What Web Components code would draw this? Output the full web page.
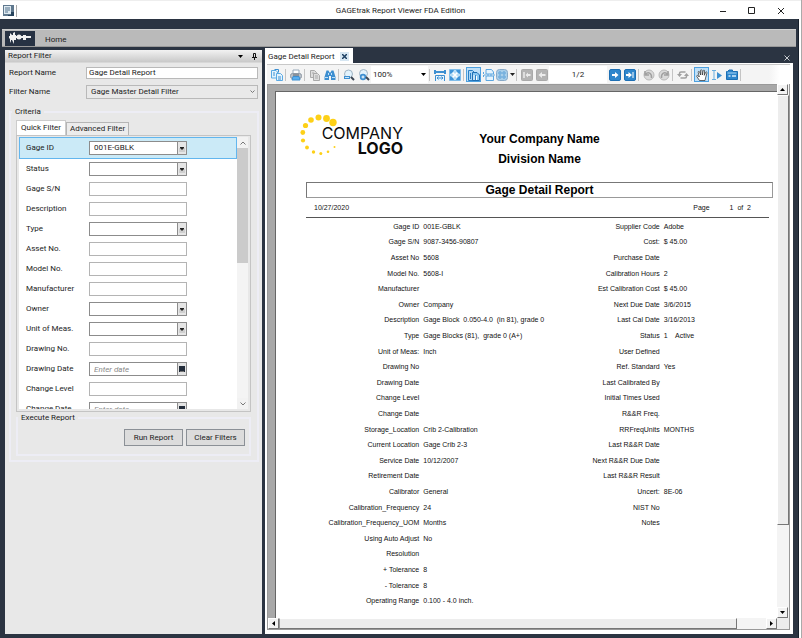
<!DOCTYPE html>
<html lang="en">
<head>
<meta charset="utf-8">
<title>GAGEtrak Report Viewer FDA Edition</title>
<style>
  html, body { margin: 0; height: 100%; }
  body { font: 8px/12px Roboto, "Open Sans", sans-serif; color: #1c1c1c; background: #fff; }
</style>
</head>
<body>
<gage-app></gage-app>
<script>
const define = (name, html, setup) => {
  const tpl = document.createElement('template');
  tpl.innerHTML = '<style>*{box-sizing:border-box}button,input,select{font:inherit;color:inherit;margin:0}</style>' + html;
  customElements.define(name, class extends HTMLElement {
    constructor() {
      super();
      this.attachShadow({ mode: 'open' }).appendChild(tpl.content.cloneNode(true));
    }
    connectedCallback() { if (setup) setup(this, this.shadowRoot); }
  });
};

/* ---------- toolbar icons ---------- */
const B = '#3d8fd1', D = '#1d5c98', G = '#a9a9a9';
const ICONS = {
  pages: `<path d="M.5 1.500h4.500l1.500 1.500v6h-6z" fill="#e4f3fd" stroke="#5aa9e3"/><path d="M5.500 4.500h4l2 2v5h-6z" fill="#e4f3fd" stroke="#5aa9e3"/><path d="M2 4h2M2 6h2M7 8h3M7 10h3M3.500 .5h4v3" stroke="${B}"/>`,
  print: `<path d="M3 1h6v4H3z" fill="#fff" stroke="#9ab"/><rect x=".5" y="4.500" width="11" height="5" rx="2" fill="#b9c0c8" stroke="#8e99a5"/><path d="M3 7.500h6l1 3.500H2z" fill="#58aef0" stroke="${B}"/><path d="M3 6h6" stroke="#59636e"/>`,
  copy: `<g fill="#ddd" stroke="${G}"><path d="M1.500 1.500h4l2 2v5h-6z"/><path d="M4.500 4.500h4l2 2v5h-6z"/></g><path d="M6 7h3M6 9h3M3 4h2" stroke="${G}"/>`,
  find: `<path d="M2.500 1.500h2l1 2h1l1-2h2l2 6.500v3H7V7H5v4H.5V8z" fill="${B}"/><path d="M4.500 4v2M7.500 4v2M1 8.500h3M8 8.500h3" stroke="#bfe0f7"/>`,
  zoomOut: `<circle cx="5.500" cy="5" r="4" fill="#e2f2fc" stroke="#9fb4c4"/><path d="M1 7h6v3H1z" fill="${B}"/><path d="M2 8.500h4" stroke="#cbe6f9"/><path d="M8 8l3 3" stroke="#3b4654" stroke-width="2"/>`,
  zoomIn: `<circle cx="5.500" cy="4.500" r="4" fill="#e2f2fc" stroke="#9fb4c4"/><circle cx="5" cy="8" r="3.200" fill="${B}"/><path d="M3.500 8h3M5 6.500v3" stroke="#fff"/><path d="M8 8l3 3" stroke="#3b4654" stroke-width="2"/>`,
  width: `<path d="M1 1v4M11 1v4M1 3h10" stroke="${B}" stroke-width="2" fill="none"/><path d="M1.500 12V6.500h9V12" stroke="${B}" fill="#e7f4fd"/><path d="M3 9h6M4.500 7.500L3 9l1.500 1.500M7.500 7.500L9 9l-1.500 1.500" stroke="${B}" fill="none"/>`,
  full: `<path d="M.5 .5h11v11H.5z" fill="#b5dcf6" stroke="#7fbdea"/><path d="M3 3l6 6M9 3L3 9" stroke="#fff" stroke-width="1.500"/><path d="M1 5V1h4L4 3l-1 1zM7 1h4v4L9 4 8 3zM1 7v4h4L4 9 3 8zM11 7v4H7l1-2 1-1z" fill="#3d93d8"/>`,
  single: `<path d="M.5 1.500h4l2 2v8h-6z" fill="#a9d5f5" stroke="#2b7fc4"/><path d="M4.500 3.500h4.500l2.500 2.500v5.500h-7z" fill="#8ac7f1" stroke="#1f6fb3"/><path d="M6 6v5M8.500 7v4" stroke="#fff"/><path d="M7.500 6v5M2.500 4v6" stroke="#2b7fc4"/>`,
  scroll: `<path d="M3 .5h5.500l2 2.500v2H3zM3 7h7.500v4.500H3z" fill="#e4f3fd" stroke="#5aa6e0"/><path d="M.5 3v6M1 6h11" stroke="#5aa6e0" stroke-dasharray="2 1"/>`,
  multi: `<rect x=".5" y=".5" width="11" height="11" rx="3" fill="#a9cfea" stroke="#86a9c8"/><path d="M3 3h2v2H3zM7 3h2v2H7zM3 7h2v2H3zM7 7h2v2H7z" fill="#d7ecfa" stroke="#5a9fd6"/>`,
  first: `<rect x=".5" y=".5" width="11" height="11" rx="1" fill="#b4b4b4" stroke="${G}"/><path d="M3 3v6" stroke="#ececec" stroke-width="1.500"/><path d="M4.500 6L7 3.500V5h2.500v2H7v1.500z" fill="#ececec"/>`,
  prev: `<rect x=".5" y=".5" width="11" height="11" rx="1" fill="#b4b4b4" stroke="${G}"/><path d="M2.500 6L6 3v2h3.500v2H6v2z" fill="#ececec"/>`,
  next: `<rect x=".5" y=".5" width="11" height="11" rx="1.500" fill="#2f86cc" stroke="#1d6fb4"/><path d="M9.500 6L6 3v2H3v2h3v2z" fill="#fff"/>`,
  last: `<rect x=".5" y=".5" width="11" height="11" rx="1.500" fill="#2f86cc" stroke="#1d6fb4"/><path d="M2 5h2.500V3L8 6 4.500 9V7H2z" fill="#fff"/><path d="M9 3v6" stroke="#fff"/>`,
  back: `<circle cx="6" cy="6" r="5" fill="#dadada" stroke="#b9b9b9"/><path d="M2 2v4h4M2.500 5.500C5 2 9 4 8.500 9" fill="none" stroke="#a0a0a0" stroke-width="1.500"/>`,
  fwd: `<circle cx="6" cy="6" r="5" fill="#dadada" stroke="#b9b9b9"/><path d="M10 2v4H6M9.500 5.500C7 2 3 4 3.500 9" fill="none" stroke="#a0a0a0" stroke-width="1.500"/>`,
  refresh: `<path d="M2.500 6V4.500Q2.500 3 4 3h4.500M9.500 6v1.500Q9.500 9 8 9H3.500" fill="none" stroke="#a0a0a0" stroke-width="1.500"/><path d="M0 5h5L2.500 8zM7 7h5L9.500 4z" fill="#a0a0a0"/>`,
  hand: `<path d="M3.500 11.500L.8 7.500c-.5-1 .8-1.600 1.500-.6L3.300 8 2.200 3.300c-.2-1 1.100-1.300 1.400-.3L4.700 6 4.500 1.500c0-1 1.400-1 1.500 0L6.400 6l.8-4.300c.2-1 1.500-.7 1.400.2L8.300 6.300l1.300-2.900c.5-.9 1.700-.4 1.400.5L9.800 8 9 11.500z" fill="#fff" stroke="#2a2a2a" stroke-width=".7"/>`,
  text: `<path d="M1 1.500h4M3 2v8M1 10.500h4" stroke="#6aaee0"/><path d="M6 3l5 3.500L6 10z" fill="${B}"/>`,
  shot: `<path d="M.5 2.500h1L3 1h3.500v1.500h5v8H.5z" fill="#2f86cc" stroke="#1d6fb4"/><path d="M1.500 4h9" stroke="#a8d5f5"/><path d="M2.500 7h2M6 7h4" stroke="#d6ecfb" stroke-width="1.500"/>`
};
define('tool-button', `
<style>
  :host { display: block; flex: none; }
  button { display: flex; align-items: center; justify-content: center; gap: 2px; min-width: 15px; height: 15px; padding: 0; border: 0; background: none; }
  :host([menu]) button { width: 19px; }
  :host([active]) button { background: #bfe0f8; border: 1px solid #4da0df; }
  svg { display: block; flex: none; }
  #arrow { display: none; }
  :host([menu]) #arrow { display: block; }
</style>
<button type="button"><svg id="icon" width="12" height="12" viewBox="0 0 12 12" fill="none"></svg><svg id="arrow" width="5" height="3" viewBox="0 0 5 3"><path d="M0 0h5L2.500 3z" fill="#222"/></svg></button>`,
(host, root) => {
  root.querySelector('#icon').innerHTML = ICONS[host.getAttribute('icon')];
  root.querySelector('button').setAttribute('aria-label', host.getAttribute('label'));
});

define('tool-divider', `
<style>:host { display: block; flex: none; width: 1px; height: 12px; margin: 0 2px 0 1px; background: #c4c4c4; }</style>`);

/* ---------- window chrome ---------- */
define('title-bar', `
<style>
  :host { display: grid; grid-template-columns: 1fr auto 1fr; align-items: center; height: 19px; padding-top: 2px; background: #fff; border-top: 1px solid #eee; }
  .left { display: flex; gap: 2px; padding-left: 3px; }
  .left i { width: 1px; height: 12px; background: #aaa; }
  .right { display: flex; justify-content: flex-end; padding-right: 6px; }
  button { width: 29px; height: 16px; padding: 0; border: 0; background: none; display: grid; place-items: center; }
  svg { display: block; }
</style>
<div class="left"><svg width="11" height="11" viewBox="0 0 11 11"><path d="M0 0h11v11H0z" fill="#5f788e"/><path d="M1 1h7v8H1z" fill="#dfeaf1"/><path d="M2 3h5M2 5h5M2 7h3" stroke="#55728c"/><path d="M8 7h3v4H5v-1h3z" fill="#27435c"/></svg><i></i></div>
<span>GAGEtrak Report Viewer FDA Edition</span>
<div class="right">
  <button type="button" aria-label="Minimize"><svg width="8" height="8"><path d="M1 4.500h6" stroke="#222"/></svg></button>
  <button type="button" aria-label="Maximize"><svg width="8" height="8"><path d="M.5 .5h6v6h-6z" fill="none" stroke="#222"/></svg></button>
  <button type="button" aria-label="Close"><svg width="8" height="8"><path d="M1 1l6 6M7 1L1 7" stroke="#222"/></svg></button>
</div>`);

define('ribbon-bar', `
<style>
  :host { display: flex; align-items: center; height: 18px; background: #bababa; border-top: 1px solid #cfcfcf; border-bottom: 1px solid #999; }
  .app { width: 30px; height: 15px; margin: 0 10px 0 3px; padding: 0; border: 0; background: #273243; display: grid; place-items: center; }
  .home { padding: 3px 0 0; border: 0; background: none; line-height: 12px; }
</style>
<button class="app" type="button" aria-label="Application menu"><svg width="24" height="13" viewBox="0 0 24 13" fill="#f2f2f2"><path d="M2 1l2 2h1L5 1l2-1v3h1v5H6v4L5 10 4 8H3v3L2 9V7L1 6V4h1z"/><path d="M8 4h15v2H8z"/><circle cx="11" cy="5" r="2.500"/><path d="M15 3h3v5h-3z"/></svg></button>
<button class="home" type="button">Home</button>`);

/* ---------- scroll bar ---------- */
define('scroll-bar', `
<style>
  :host { display: flex; flex-direction: column; width: 11px; background: #f4f4f4; }
  button { flex: none; width: 11px; height: 11px; padding: 0; border: 0; background: #f2f2f2; display: grid; place-items: center; }
  button svg { display: block; }
  .track { flex: 1; display: flex; flex-direction: column; min-height: 0; }
  .thumb { flex: var(--thumb) 1 0; background: #cbcbcb; }
  .rest { flex: var(--rest) 1 0; }
  .old { display: none; }
  :host([classic]) .old { display: block; }
  :host([classic]) .new { display: none; }
  :host([classic]) .thumb { background: #ededed; border: 1px solid #fff; border-right-color: #777; border-bottom-color: #777; }
  :host([classic]) button { border: 1px solid #fff; border-right-color: #777; border-bottom-color: #777; }
  :host([horizontal]), :host([horizontal]) .track { flex-direction: row; }
  :host([horizontal]) { width: auto; height: 11px; }
  :host([horizontal]) svg { transform: rotate(-90deg); }
  :host([horizontal]) .thumb { border-left-color: #999; }
</style>
<button type="button" aria-label="Scroll back"><svg class="new" width="6" height="4"><path d="M.5 3.500L3 1l2.500 2.500" fill="none" stroke="#777"/></svg><svg class="old" width="5" height="3"><path d="M0 3h5L2.500 0z"/></svg></button>
<div class="track"><div class="thumb"></div><div class="rest"></div></div>
<button type="button" aria-label="Scroll forward"><svg class="new" width="6" height="4"><path d="M.5 .5L3 3 5.500 .5" fill="none" stroke="#777"/></svg><svg class="old" width="5" height="3"><path d="M0 0h5L2.500 3z"/></svg></button>`);

/* ---------- filter row ---------- */
define('filter-row', `
<style>
  :host { display: grid; grid-template-columns: 63px 98px; align-items: center; height: 20px; padding-left: 6px; border: 1px solid transparent; border-width: 0 1px; }
  :host([selected]) { height: 22px; background: #cbeaf7; border: 1px solid #62b6ee; }
  .box { display: flex; align-items: center; }
  input, select { min-width: 0; width: 100%; height: 14px; padding: 0 4px; background: #fff; border: 1px solid #b4b4b4; border-radius: 0; outline: 0; appearance: none; line-height: 12px; }
  .box.drop input, .box.drop select { border-color: #8c8c8c; }
  .wrap { position: relative; flex: 1; display: flex; }
  .wrap svg { position: absolute; right: 0; top: 0; pointer-events: none; }
  ::placeholder { font-style: italic; color: #8a8a8a; opacity: 1; }
  .cal { flex: none; width: 10px; height: 14px; margin-left: -1px; padding: 0; border: 1px solid #8c8c8c; background: #e4e4e4; display: grid; place-items: center; }
</style>
<label for="f"></label><div class="box"></div>`,
(host, root) => {
  root.querySelector('label').textContent = host.getAttribute('label');
  const box = root.querySelector('.box');
  const kind = host.getAttribute('kind');
  if (kind === 'drop') {
    box.className = 'box drop';
    box.innerHTML = `<div class="wrap"><select id="f"><option>${host.getAttribute('value') || ''}</option></select><svg width="10" height="14" viewBox="0 0 10 14"><path d="M.5 .5h9v13h-9z" fill="#e6e6e6" stroke="#8c8c8c"/><path d="M2 7h6v4H2z" fill="#cfcfcf"/><path d="M3 6h4v1L5 9 3 7z" fill="#222"/></svg></div>`;
  } else if (kind === 'date') {
    box.className = 'box drop';
    box.innerHTML = `<input id="f" type="text" placeholder="Enter date"><button class="cal" type="button" aria-label="Open calendar"><svg width="6" height="6"><path d="M0 0h6v6H0z" fill="#222c3a"/><path d="M1 5.500h4" stroke="#777"/></svg></button>`;
  } else box.innerHTML = '<input id="f" type="text">';
});

/* ---------- left panel ---------- */
define('filter-panel', `
<style>
  :host { display: flex; flex-direction: column; background: #e8e8e8; }
  header { display: flex; align-items: center; gap: 9px; height: 13px; padding: 0 5px 0 3px; background: linear-gradient(#f2f2f2, #c9c9c9); border-bottom: 1px solid #d8d8d8; }
  header span { flex: 1; }
  header button { display: block; padding: 0; border: 0; background: none; line-height: 0; }
  .form { display: grid; grid-template-columns: 77px 1fr; align-items: center; row-gap: 6px; padding: 4px 4px 0; }
  .form input, .form select { width: 100%; height: 12px; padding: 0 2px; border: 1px solid #b9b9b9; border-radius: 0; background: #fff; appearance: none; }
  .form select { height: 14px; padding: 0 4px; background: #e9e9e9; }
  .pick { position: relative; display: flex; }
  .pick svg { position: absolute; right: 3px; top: 5px; pointer-events: none; }
  fieldset { margin: 0; padding: 0; border: 2px solid #ededf5; min-width: 0; }
  legend { padding: 0 3px; margin-left: -4px; line-height: 12px; }
  .criteria { margin: 7px 3px 0 4px; padding: 2px 6px 4px 5px; }
  .tabs { display: flex; align-items: flex-end; }
  .tabs button { height: 13px; padding: 0 3px; border: 1px solid #b5b5b5; border-bottom: 0; background: #ececec; line-height: 12px; }
  .tabs button[aria-selected=true] { height: 15px; padding: 0 4px; background: #fff; border-color: #ccc; }
  .tabpanel { padding: 1px 2px 2px; border: 1px solid #c4c4c4; }
  .list { display: grid; grid-template-columns: 1fr 11px; height: 272px; overflow: hidden; }
  .rows { background: #fff; overflow: hidden; }
  .exec { padding: 5px 4px 8px; }
  .actions { display: flex; justify-content: flex-end; gap: 3px; }
  .actions button { width: 59px; height: 17px; padding: 0; border: 1px solid #8b9096; background: #dcdcdc; }
  scroll-bar { --thumb: 46; --rest: 54; }
</style>
<header><span>Report Filter</span><button type="button" aria-label="Panel menu"><svg width="5" height="3"><path d="M0 0h5L2.500 3z"/></svg></button><button type="button" aria-label="Pin panel"><svg width="5" height="7"><path d="M1.500 4V.5h2V4" fill="none" stroke="#111"/><path d="M0 4.500h5M2.500 5v2" stroke="#111"/></svg></button></header>
<div class="form">
  <label for="rn">Report Name</label><input id="rn" type="text" value="Gage Detail Report">
  <label for="fn">Filter Name</label><div class="pick"><select id="fn"><option>Gage Master Detail Filter</option></select><svg width="5" height="4"><path d="M.5 .5L2.500 2.500 4.500 .5" fill="none" stroke="#777"/></svg></div>
</div>
<fieldset class="criteria"><legend>Criteria</legend>
  <div class="tabs" role="tablist"><button type="button" role="tab" aria-selected="true">Quick Filter</button><button type="button" role="tab" aria-selected="false">Advanced Filter</button></div>
  <div class="tabpanel"><div class="list"><div class="rows">
    <filter-row selected label="Gage ID" kind="drop" value="001E-GBLK"></filter-row>
    <filter-row label="Status" kind="drop"></filter-row>
    <filter-row label="Gage S/N"></filter-row>
    <filter-row label="Description"></filter-row>
    <filter-row label="Type" kind="drop"></filter-row>
    <filter-row label="Asset No."></filter-row>
    <filter-row label="Model No."></filter-row>
    <filter-row label="Manufacturer"></filter-row>
    <filter-row label="Owner" kind="drop"></filter-row>
    <filter-row label="Unit of Meas." kind="drop"></filter-row>
    <filter-row label="Drawing No."></filter-row>
    <filter-row label="Drawing Date" kind="date"></filter-row>
    <filter-row label="Change Level"></filter-row>
    <filter-row label="Change Date" kind="date"></filter-row>
  </div><scroll-bar></scroll-bar></div></div>
  <fieldset class="exec"><legend>Execute Report</legend><div class="actions"><button type="button">Run Report</button><button type="button">Clear Filters</button></div></fieldset>
</fieldset>`);

/* ---------- toolbar ---------- */
define('viewer-toolbar', `
<style>
  :host { display: flex; align-items: center; height: 20px; padding-left: 2px; background: linear-gradient(90deg, #f4f4f4 96%, #fff 98%); border-top: 1px solid #c8c8c8; }
  .zoom { position: relative; flex: none; width: 57px; display: flex; background: #fff; }
  .zoom svg { position: absolute; right: 2px; top: 7px; pointer-events: none; }
  select, input { width: 100%; height: 17px; padding: 0 2px; border: 0; border-radius: 0; background: #fff; appearance: none; }
  input { flex: none; width: 58px; text-align: center; }
</style>
<tool-button icon="pages" label="Document map"></tool-button><tool-divider></tool-divider>
<tool-button icon="print" label="Print"></tool-button><tool-divider></tool-divider>
<tool-button icon="copy" label="Copy"></tool-button><tool-button icon="find" label="Find"></tool-button><tool-divider></tool-divider>
<tool-button icon="zoomOut" label="Zoom out"></tool-button><tool-button icon="zoomIn" label="Zoom in"></tool-button>
<div class="zoom"><select aria-label="Zoom"><option>100%</option></select><svg width="5" height="3"><path d="M0 0h5L2.500 3z"/></svg></div><tool-divider></tool-divider>
<tool-button icon="width" label="Fit width"></tool-button><tool-button icon="full" label="Fit page"></tool-button><tool-divider></tool-divider>
<tool-button active icon="single" label="Single page"></tool-button><tool-button icon="scroll" label="Continuous"></tool-button><tool-button menu icon="multi" label="Multiple pages"></tool-button><tool-divider></tool-divider>
<tool-button icon="first" label="First page"></tool-button><tool-button icon="prev" label="Previous page"></tool-button>
<input type="text" aria-label="Page" value="1/2">
<tool-button icon="next" label="Next page"></tool-button><tool-button icon="last" label="Last page"></tool-button><tool-divider></tool-divider>
<tool-button icon="back" label="Backward"></tool-button><tool-button icon="fwd" label="Forward"></tool-button><tool-divider></tool-divider>
<tool-button icon="refresh" label="Refresh"></tool-button><tool-divider></tool-divider>
<tool-button active icon="hand" label="Pan"></tool-button><tool-button icon="text" label="Select text"></tool-button><tool-button icon="shot" label="Snapshot"></tool-button><tool-divider></tool-divider>`);

/* ---------- report page ---------- */
define('company-logo', `
<style>:host { display: block; } svg { display: block; }</style>
<svg width="106" height="44" viewBox="0 0 106 44" role="img" aria-label="Company logo">
  <g fill="#fdd017"><circle cx="33" cy="9.500" r="3.700"/><circle cx="26.500" cy="5.500" r="3.400"/><circle cx="18.500" cy="4.500" r="3"/><circle cx="11" cy="7" r="2.800"/><circle cx="5.500" cy="12.500" r="2.600"/><circle cx="2.800" cy="19.500" r="2.400"/><circle cx="3" cy="27.500" r="2.100"/><circle cx="7" cy="34.500" r="1.900"/><circle cx="13.500" cy="39" r="1.700"/><circle cx="20.800" cy="40.500" r="1.500"/><circle cx="28" cy="38.800" r="1.300"/><circle cx="34.500" cy="34" r="1"/></g>
  <g font-family="Inter, sans-serif" fill="#0b0b0b" text-anchor="end"><text x="103" y="26" font-size="16">COMPANY</text><text x="103" y="41" font-size="16" font-weight="700">LOGO</text></g>
</svg>`);

const LEFT = [['Gage ID','001E-GBLK'],['Gage S/N','9087-3456-90807'],['Asset No','5608'],['Model No.','5608-I'],['Manufacturer',''],['Owner','Company'],['Description','Gage Block  0.050-4.0  (in 81), grade 0'],['Type','Gage Blocks (81),  grade 0 (A+)'],['Unit of Meas:','Inch'],['Drawing No',''],['Drawing Date',''],['Change Level',''],['Change Date',''],['Storage_Location','Crib 2-Calibration'],['Current Location','Gage Crib 2-3'],['Service Date','10/12/2007'],['Retirement Date',''],['Calibrator','General'],['Calibration_Frequency','24'],['Calibration_Frequency_UOM','Months'],['Using Auto Adjust','No'],['Resolution',''],['+ Tolerance','8'],['- Tolerance','8'],['Operating Range','0.100 - 4.0 inch.']];
const RIGHT = [['Supplier Code','Adobe'],['Cost:','$ 45.00'],['Purchase Date',''],['Calibration Hours','2'],['Est Calibration Cost','$ 45.00'],['Next Due Date','3/6/2015'],['Last Cal Date','3/16/2013'],['Status','1    Active'],['User Defined',''],['Ref. Standard','Yes'],['Last Calibrated By',''],['Initial Times Used',''],['R&&R Freq.',''],['RRFreqUnits','MONTHS'],['Last R&&R Date',''],['Next R&&R Due Date',''],['Last R&&R Result',''],['Uncert:','8E-06'],['NIST No',''],['Notes','']];

define('report-page', `
<style>
  :host { display: flex; flex-direction: column; padding: 19px 4px 9px 30px; background: #fff; border: 1px solid #666; border-width: 1px 0 0 1px; font: 7px/12px "Liberation Sans", Arial, sans-serif; color: #111; }
  .head { display: grid; grid-template-columns: 1fr auto 1fr; margin-bottom: 13px; }
  company-logo { margin: 2px 0 0 -6px; }
  h1, h2 { margin: 0; font-size: 12px; line-height: 20px; text-align: center; color: #000; }
  .names { padding-top: 18px; }
  .title { line-height: 14px; border: 1px solid #999; border-top-color: #777; border-left-color: #777; }
  .meta { display: flex; align-items: center; height: 20px; padding: 0 18px 0 8px; border-bottom: 1px solid #555; margin: 0 4px 1px 0; }
  .meta span:first-child { flex: 1; }
  .meta span:last-child { margin-left: 20px; white-space: pre; }
  .grid { flex: 1; min-height: 0; display: grid; grid-template-columns: 113fr 119fr 113fr 109fr; grid-template-rows: repeat(25, minmax(0, 1fr)); column-gap: 4px; align-items: center; }
  .grid span { white-space: pre; min-width: 0; }
  .k { text-align: right; }
</style>
<div class="head"><company-logo></company-logo><div class="names"><h1>Your Company Name</h1><h1>Division Name</h1></div><i></i></div>
<h2 class="title">Gage Detail Report</h2>
<div class="meta"><span>10/27/2020</span><span>Page</span><span>1  of  2</span></div>
<div class="grid"></div>`,
(host, root) => {
  const grid = root.querySelector('.grid');
  if (grid.childElementCount) return;
  [LEFT, RIGHT].forEach((rows, side) => rows.forEach((row, i) => [0, 1].forEach(part => {
    const cell = document.createElement('span');
    cell.textContent = row[part];
    cell.style.gridArea = `${i + 1} / ${side * 2 + part + 1}`;
    if (!part) cell.className = 'k';
    grid.append(cell);
  })));
});

/* ---------- document area ---------- */
define('report-viewer', `
<style>
  :host { display: flex; flex-direction: column; min-width: 0; }
  .tabs { display: flex; justify-content: space-between; align-items: flex-end; height: 15px; }
  .tab { display: flex; align-items: center; gap: 5px; height: 15px; padding: 2px 4px 0 3px; background: #fff; border: 0; white-space: nowrap; }
  .tab button { width: 9px; height: 9px; padding: 0; border: 0; background: #d6e6f2; display: grid; place-items: center; }
  .close { padding: 0 3px 2px 0; border: 0; background: none; line-height: 0; }
  .frame { flex: 1; min-height: 0; display: flex; flex-direction: column; padding: 1px 3px 4px 2px; background: #fff; }
  .well { flex: 1; min-height: 0; display: grid; grid-template-columns: minmax(0, 1fr) 12px; grid-template-rows: minmax(0, 1fr) 11px; border: 1px solid #999; border-top: 0; }
  .paper { display: flex; background: #a8a8a8; padding: 6px 0 0 7px; border-top: 1px solid #999; min-width: 0; min-height: 0; }
  report-page { flex: 1; min-width: 0; }
  .v { width: 12px; --thumb: 84; --rest: 16; }
  .h { --thumb: 94; --rest: 6; }
  .corner { background: #ececec; }
</style>
<div class="tabs"><div class="tab"><span>Gage Detail Report</span><button type="button" aria-label="Close tab"><svg width="5" height="5"><path d="M0 0l5 5M5 0L0 5" stroke="#1d3f63" stroke-width="1.500"/></svg></button></div><button class="close" type="button" aria-label="Close document"><svg width="6" height="6"><path d="M.5 .5l5 5M5.500 .5l-5 5" stroke="#c8ccd0"/></svg></button></div>
<div class="frame"><viewer-toolbar></viewer-toolbar>
  <div class="well"><div class="paper"><report-page></report-page></div><scroll-bar class="v" classic></scroll-bar><scroll-bar class="h" classic horizontal></scroll-bar><div class="corner"></div></div>
</div>`);

define('gage-app', `
<style>
  :host { display: flex; flex-direction: column; height: 100vh; border-right: 1px solid #aaa; }
  .body { flex: 1; min-height: 0; display: flex; flex-direction: column; margin-right: 2px; padding: 10px 2px 4px; background: #2b3442; border-right: 1px solid #17202c; }
  .main { flex: 1; min-height: 0; display: grid; grid-template-columns: minmax(0, 257fr) minmax(0, 528fr); gap: 3px; padding: 1px 3px 0; }
  filter-panel { margin-top: 2px; }
</style>
<title-bar></title-bar>
<div class="body"><ribbon-bar></ribbon-bar><div class="main"><filter-panel></filter-panel><report-viewer></report-viewer></div></div>`);
</script>
</body>
</html>
